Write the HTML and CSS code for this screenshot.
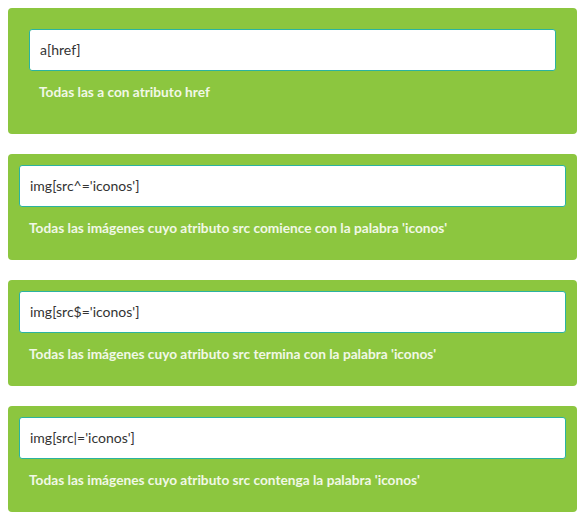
FILE: index.html
```html
<!DOCTYPE html>
<html lang="es">
<head>
<meta charset="utf-8">
<link rel="stylesheet" href="styles.css">
</head>
<body>
<div class="card card-wide">
  <div class="field">a[href]</div>
  <p class="desc">Todas las a con atributo href</p>
</div>
<div class="card">
  <div class="field">img[src^='iconos']</div>
  <p class="desc">Todas las imágenes cuyo atributo src comience con la palabra 'iconos'</p>
</div>
<div class="card">
  <div class="field">img[src$='iconos']</div>
  <p class="desc">Todas las imágenes cuyo atributo src termina con la palabra 'iconos'</p>
</div>
<div class="card">
  <div class="field">img[src|='iconos']</div>
  <p class="desc">Todas las imágenes cuyo atributo src contenga la palabra 'iconos'</p>
</div>
</body>
</html>
```

FILE: styles.css
```css
body {
  margin: 8px;
  background: #ffffff;
  font-family: Lato, "Open Sans", sans-serif;
  display: flex;
  flex-direction: column;
  gap: 20px;
}
.card {
  background: #8cc63f;
  border-radius: 4px;
  padding: 11px;
}
.card-wide {
  padding: 21px;
}
.field {
  height: 40px;
  border: 1px solid #2bb3a0;
  border-radius: 3px;
  background: #ffffff;
  color: #333333;
  font-size: 14px;
  line-height: 40px;
  padding: 0 10px;
}
.desc {
  margin: 12px 0;
  padding-left: 10px;
  color: #f1f8e6;
  font-size: 13.7px;
  font-weight: bold;
  line-height: 18px;
}
```
